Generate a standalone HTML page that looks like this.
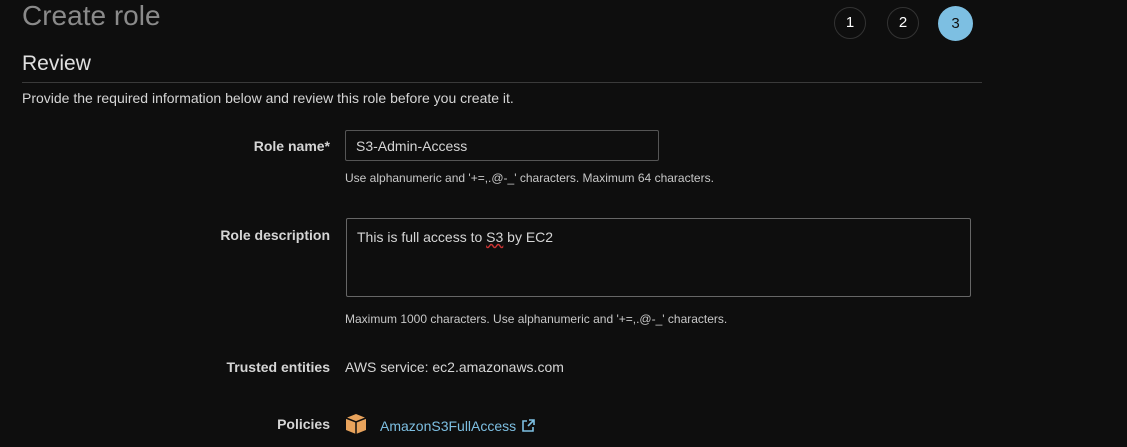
<!DOCTYPE html>
<html><head><style>
body{margin:0;width:1127px;height:447px;background:#0e0e0e;font-family:"Liberation Sans",sans-serif;color:#d5d5d5;position:relative;overflow:hidden}
.a{position:absolute;white-space:nowrap}
.c{position:absolute;width:32px;height:32px;border-radius:50%;border:1px solid #333;box-sizing:border-box;text-align:center;line-height:30px;font-size:15px;color:#fff}
.lbl{position:absolute;right:797px;font-weight:bold;font-size:14px;color:#d5d5d5}
.hint{font-size:12px;color:#c8c8c8}
</style></head><body>
<div class="a" style="left:22px;top:0px;font-size:28px;color:#8a8a8a;line-height:32px">Create role</div>
<div class="c" style="left:834px;top:7px">1</div>
<div class="c" style="left:887px;top:7px">2</div>
<div class="c" style="left:938px;top:6px;width:35px;height:35px;line-height:35px;border:none;background:#7dbfe2;color:#111">3</div>
<div class="a" style="left:22px;top:52px;font-size:21px;color:#e0e0e0">Review</div>
<div class="a" style="left:22px;top:82px;width:960px;height:1px;background:#3a3a3a"></div>
<div class="a" style="left:22px;top:90px;font-size:14px">Provide the required information below and review this role before you create it.</div>
<div class="lbl" style="top:138px">Role name*</div>
<div class="a" style="left:345px;top:130px;border:1px solid #555;border-radius:2px;background:#0e0e0e;font-size:14px;line-height:30px;padding-left:10px;box-sizing:border-box;width:314px;height:31px">S3-Admin-Access</div>
<div class="a hint" style="left:345px;top:171px">Use alphanumeric and '+=,.@-_' characters. Maximum 64 characters.</div>
<div class="lbl" style="top:227px">Role description</div>
<div class="a" style="left:346px;top:218px;width:625px;height:79px;border:1px solid #666;border-radius:2px;box-sizing:border-box;font-size:14px;padding:10px 10px">This is full access to <span style="text-decoration:underline wavy #c33">S3</span> by EC2</div>
<div class="a hint" style="left:345px;top:312px">Maximum 1000 characters. Use alphanumeric and '+=,.@-_' characters.</div>
<div class="lbl" style="top:359px">Trusted entities</div>
<div class="a" style="left:345px;top:359px;font-size:14px">AWS service: ec2.amazonaws.com</div>
<div class="lbl" style="top:416px">Policies</div>
<svg class="a" style="left:345px;top:413px" width="22" height="22" viewBox="0 0 22 22"><path d="M11 1L21 5V17L11 21L1 17V5Z" fill="#e8a35c"/><path d="M1 5L11 9L21 5M11 9V21" stroke="#0e0e0e" stroke-width="1.5" fill="none"/></svg>
<div class="a" style="left:380px;top:418px;font-size:14px;color:#7dbfe2">AmazonS3FullAccess</div>
<svg class="a" style="left:521px;top:418px" width="15" height="15" viewBox="0 0 15 15" fill="none" stroke="#7dbfe2" stroke-width="1.6"><path d="M6 3H2V13H12V9M8 2H13V7M13 2L7 8"/></svg>
</body></html>
